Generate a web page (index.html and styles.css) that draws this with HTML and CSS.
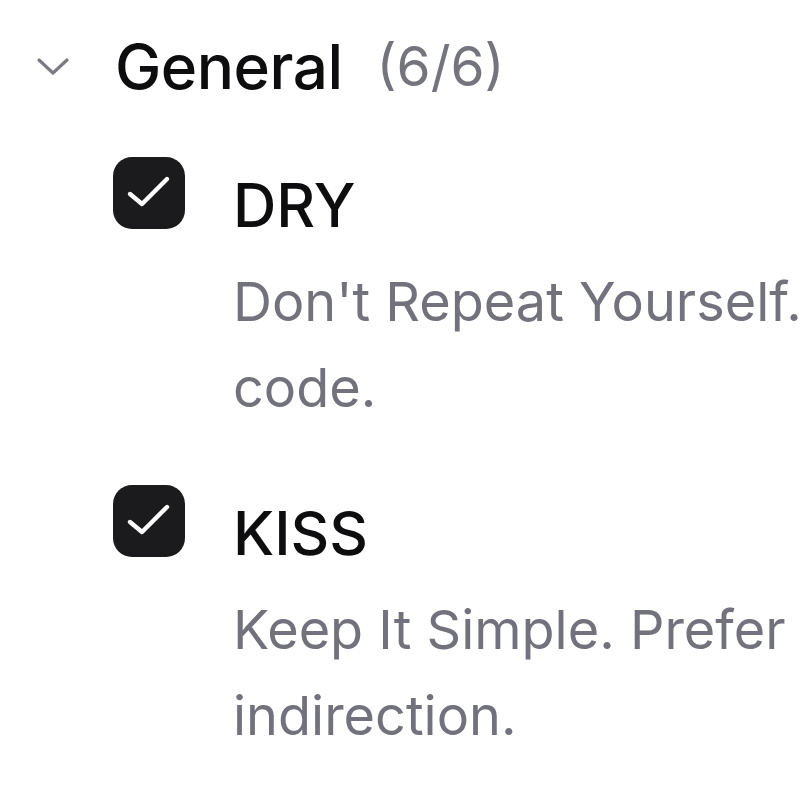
FILE: index.html
```html
<!DOCTYPE html>
<html lang="en">
<head>
<meta charset="utf-8">
<title>General</title>
<link rel="stylesheet" href="styles.css">
</head>
<body>
<section class="group">
  <header class="group-head">
    <svg class="chevron" width="40" height="24" viewBox="0 0 40 24" aria-hidden="true">
      <polyline points="6,5 20,18 34,5" fill="none" stroke="#7b7b84" stroke-width="3.2" stroke-linecap="round" stroke-linejoin="round"/>
    </svg>
    <span class="group-title">General</span>
    <span class="group-count">(6/6)</span>
  </header>
  <ul class="rules">
    <li class="rule">
      <svg class="check" width="72" height="72" viewBox="0 0 72 72" aria-hidden="true">
        <rect x="0" y="0" width="72" height="72" rx="19" fill="#1b1b1d"/>
        <polyline points="17,37 29,47 54,22" fill="none" stroke="#fff" stroke-width="4.4" stroke-linecap="round" stroke-linejoin="round"/>
      </svg>
      <div class="rule-body">
        <div class="rule-title">DRY</div>
        <p class="rule-desc">Don't Repeat Yourself. Extract shared logic instead of duplicating<br>code.</p>
      </div>
    </li>
    <li class="rule">
      <svg class="check" width="72" height="72" viewBox="0 0 72 72" aria-hidden="true">
        <rect x="0" y="0" width="72" height="72" rx="19" fill="#1b1b1d"/>
        <polyline points="17,37 29,47 54,22" fill="none" stroke="#fff" stroke-width="4.4" stroke-linecap="round" stroke-linejoin="round"/>
      </svg>
      <div class="rule-body">
        <div class="rule-title">KISS</div>
        <p class="rule-desc">Keep It Simple. Prefer straightforward solutions over needless<br>indirection.</p>
      </div>
    </li>
  </ul>
</section>
</body>
</html>
```
FILE: styles.css
```css
html, body {
  margin: 0;
  padding: 0;
  background: #ffffff;
  overflow: hidden;
}

body {
  font-family: Inter, "Noto Sans", "Liberation Sans", sans-serif;
  color: #0d0d0f;
  width: 800px;
  height: 800px;
}

.group {
  padding: 28px 0 0 33px;
}

.group-head {
  display: flex;
  align-items: center;
  height: 77px;
  white-space: nowrap;
}

.chevron {
  flex: none;
  margin-right: 42px;
}

.group-title {
  font-size: 62px;
  font-weight: 500;
  line-height: 77px;
  letter-spacing: -0.5px;
}

.group-count {
  font-size: 55px;
  line-height: 77px;
  color: #74747d;
  margin-left: 34px;
}

.rules {
  list-style: none;
  margin: 52px 0 0 80px;
  padding: 0;
  display: flex;
  flex-direction: column;
  gap: 54px;
}

.rule {
  display: flex;
  align-items: flex-start;
  gap: 48px;
}

.check {
  flex: none;
  display: block;
}

.rule-body {
  white-space: nowrap;
}

.rule-title {
  font-size: 60px;
  font-weight: 500;
  line-height: 96px;
}

.rule-desc {
  margin: 6px 0 0;
  font-size: 54px;
  line-height: 86px;
  color: #72727c;
}
```
